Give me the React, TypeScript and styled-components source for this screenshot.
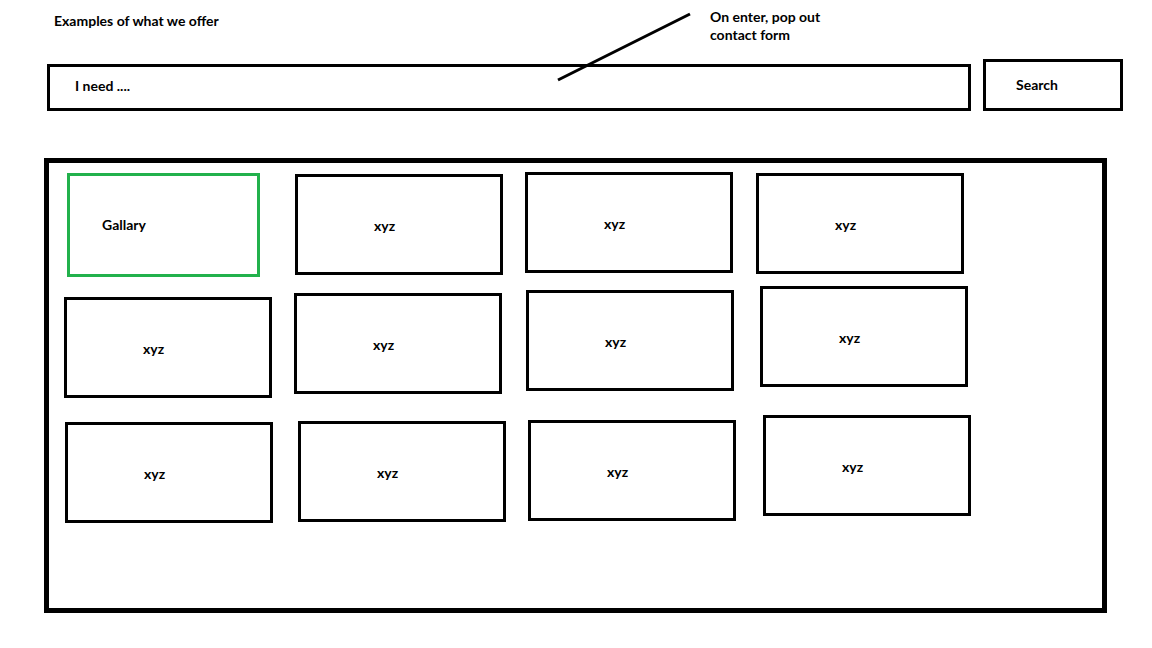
import styled, { createGlobalStyle } from 'styled-components'

const GlobalStyle = createGlobalStyle`
    html, body {
        margin: 0;
        padding: 0;
        background: #fff;
    }
    body {
        font-family: Lato, "Liberation Sans", sans-serif;
        font-weight: 700;
        font-size: 14px;
        color: #000;
    }
`;

const StyledPage = styled.div`
    position: relative;
    width: 1152px;
    height: 648px;
    overflow: hidden;
`;

const StyledTitle = styled.h1`
    margin: 0;
    padding: 13px 0 0 54px;
    font-size: 14px;
    line-height: 16px;
    font-weight: 700;
`;

const StyledNote = styled.div`
    position: absolute;
    left: 710px;
    top: 8px;
    line-height: 18px;
`;

const StyledPointer = styled.svg`
    position: absolute;
    left: 556px;
    top: 12px;
    pointer-events: none;
`;

const StyledSearchRow = styled.div`
    display: flex;
    align-items: flex-end;
    gap: 12px;
    margin-top: 30px;
    padding-left: 47px;
`;

const StyledSearchBox = styled.div`
    box-sizing: border-box;
    display: flex;
    align-items: center;
    width: 924px;
    height: 47px;
    padding: 0 0 3px 25px;
    border: 3px solid #000;
    line-height: 16px;
`;

const StyledSearchButton = styled.div`
    box-sizing: border-box;
    display: flex;
    align-items: center;
    width: 140px;
    height: 52px;
    padding-left: 30px;
    border: 3px solid #000;
    line-height: 16px;
`;

const StyledPanel = styled.div`
    box-sizing: border-box;
    display: grid;
    grid-template-columns: repeat(4, 208px);
    grid-auto-rows: 101px;
    column-gap: 24px;
    row-gap: 22px;
    align-content: start;
    width: 1063px;
    height: 455px;
    margin: 47px 0 0 44px;
    padding: 10px 0 0 16px;
    border: 5px solid #000;
`;

const StyledCard = styled.div<{ $featured?: boolean; $dx: number; $dy: number }>`
    box-sizing: border-box;
    display: flex;
    align-items: center;
    width: ${(p) => (p.$featured ? 193 : 208)}px;
    height: ${(p) => (p.$featured ? 104 : 101)}px;
    padding: ${(p) => (p.$featured ? '0 0 0 32px' : '3px 0 0 76px')};
    border: 3px solid ${(p) => (p.$featured ? '#22B14C' : '#000')};
    line-height: 16px;
    transform: translate(${(p) => p.$dx}px, ${(p) => p.$dy}px);
`;

// hand drawn boxes, so each one sits a little off the grid
const cards = [
    { label: 'Gallary', featured: true, dx: 2, dy: 0 },
    { label: 'xyz', dx: -2, dy: 1 },
    { label: 'xyz', dx: -4, dy: -1 },
    { label: 'xyz', dx: -5, dy: 0 },
    { label: 'xyz', dx: -1, dy: 1 },
    { label: 'xyz', dx: -3, dy: -3 },
    { label: 'xyz', dx: -3, dy: -6 },
    { label: 'xyz', dx: -1, dy: -10 },
    { label: 'xyz', dx: 0, dy: 3 },
    { label: 'xyz', dx: 1, dy: 2 },
    { label: 'xyz', dx: -1, dy: 1 },
    { label: 'xyz', dx: 2, dy: -4 },
];

const App = () => {
    return (
        <StyledPage>
            <GlobalStyle />
            <StyledTitle>Examples of what we offer</StyledTitle>
            <StyledNote>
                On enter, pop out
                <br />
                contact form
            </StyledNote>
            <StyledSearchRow>
                <StyledSearchBox>I need ....</StyledSearchBox>
                <StyledSearchButton>Search</StyledSearchButton>
            </StyledSearchRow>
            <StyledPanel>
                {cards.map((c, i) => (
                    <StyledCard key={i} $featured={c.featured} $dx={c.dx} $dy={c.dy}>
                        {c.label}
                    </StyledCard>
                ))}
            </StyledPanel>
            <StyledPointer width="137" height="71" viewBox="0 0 137 71">
                <line x1="2" y1="68" x2="134" y2="2" stroke="#000" strokeWidth="3" />
            </StyledPointer>
        </StyledPage>
    )
}

export default App
